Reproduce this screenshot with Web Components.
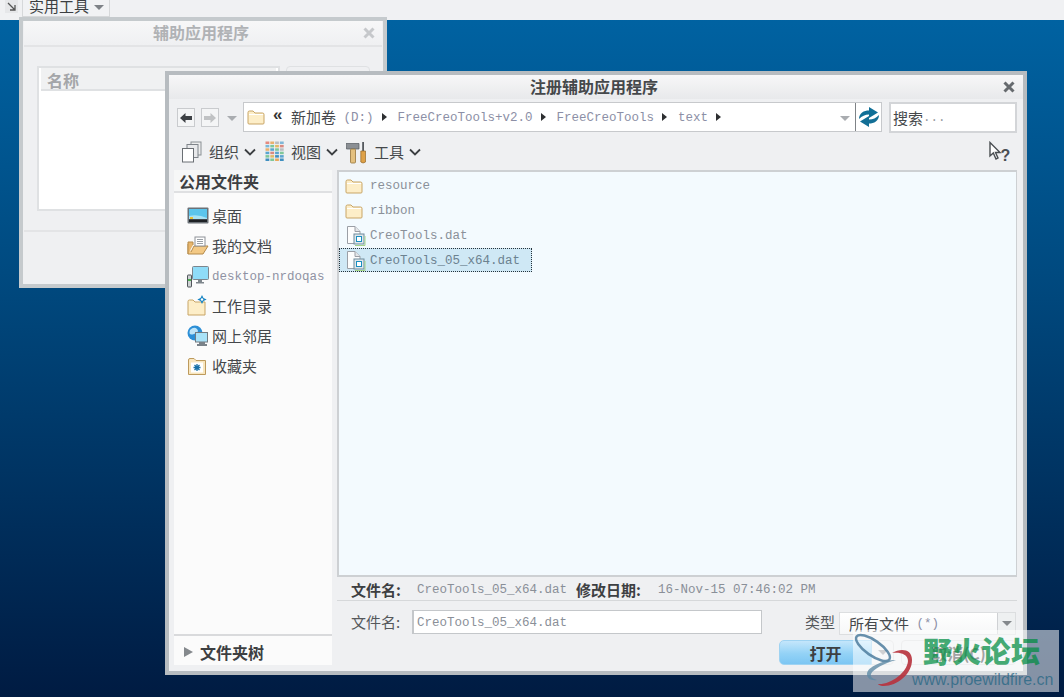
<!DOCTYPE html>
<html lang="zh"><head><meta charset="utf-8"><style>
html,body{margin:0;padding:0;height:100%}
body{width:1064px;height:697px;overflow:hidden;font-family:"Noto Sans CJK SC","Noto Sans",sans-serif}
</style></head><body>
<cad-desktop>
  <cad-ribbon slot="top">实用工具</cad-ribbon>
  <back-dialog></back-dialog>
  <file-dialog></file-dialog>
  <forum-mark></forum-mark>
</cad-desktop>
<script>
const CJK='"Noto Sans CJK SC","Noto Sans",sans-serif', MONO='"Liberation Mono",monospace';
const VIEWC=[['#e58a7e','#e9b06c','#b9bcc0','#7fb7d8'],['#7ab8d8','#7fc79a','#e3b866','#d98a80'],['#e9b06c','#5aa5d0','#7fc79a','#b9bcc0'],['#5aa5d0','#d98a80','#5aa5d0','#7fc79a'],['#7fc79a','#e3b866','#3f8fc0','#5aa5d0'],['#3f8fc0','#7fc79a','#e9a95c','#3f8fc0']];
const ICON={
 folder:`<svg width="18" height="16" viewBox="0 0 18 16"><path d="M1 3.500Q1 2 2.500 2H6L8 4H15.500Q17 4 17 5.500V14Q17 15 16 15H2Q1 15 1 14Z" fill="#fdeec8" stroke="#c8a566"/><path d="M2 5.500H16" stroke="#fff"/></svg>`,
 file:`<svg width="22" height="22" viewBox="0 0 22 22"><path d="M2.500 1.500H10L15 6.500V18.500H2.500Z" fill="#fdfdfd" stroke="#9b9fa6"/><path d="M10 1.500V6.500H15" fill="#e4e6e9" stroke="#9b9fa6"/><rect x="9" y="9" width="10" height="10" fill="#dfe7ec" stroke="#6f8b9c"/><rect x="11.500" y="11.500" width="5" height="5" fill="#fff" stroke="#1a8fc0"/><path d="M10 20.500H20V11" fill="none" stroke="#a5d58a"/></svg>`,
 desk:`<svg width="22" height="18" viewBox="0 0 22 18"><rect x=".5" y=".5" width="21" height="16" rx="1" fill="#6b7177"/><rect x="2" y="2" width="18" height="10" fill="#5cc5ec"/><path d="M2 9Q11 7 20 11V12H2Z" fill="#a9e3f5"/><rect x="2" y="12.500" width="18" height="2.500" fill="#1d2125"/><rect x="3" y="10" width="3" height="2" fill="#e7c13c"/></svg>`,
 docs:`<svg width="22" height="20" viewBox="0 0 22 20"><path d="M1 8V18H16L21 10H7L4 16" fill="#f3c985" stroke="#b48a4a"/><path d="M1 18V6H6V9" fill="#e8b66d" stroke="#b48a4a"/><rect x="8" y="1" width="10" height="9" fill="#fff" stroke="#8d9197"/><path d="M10 3.500H16M10 5.500H16M10 7.500H16" stroke="#9aa0a6"/></svg>`,
 pc:`<svg width="22" height="22" viewBox="0 0 22 22"><rect x="5.500" y=".5" width="16" height="13" rx="1" fill="#8fdcf8" stroke="#7d858c"/><path d="M11 14V16H9V17.500H17V16H15V14" fill="#7e868c"/><rect x=".5" y="9" width="4" height="12" rx=".5" fill="#cfd2d4" stroke="#50565b"/><rect x="1" y="13" width="3" height="2" fill="#4caf50"/></svg>`,
 work:`<svg width="21" height="22" viewBox="0 0 21 22"><path d="M1 6.500Q1 5 2.500 5H6L8 7H18V20H1Z" fill="#fdeec8" stroke="#c8a566"/><path d="M15 0L16.500 3L19.700 4.500L16.500 6L15 9L13.500 6L10.300 4.500L13.500 3Z" fill="#1b86c4"/><circle cx="15" cy="4.500" r="1.200" fill="#fff"/></svg>`,
 net:`<svg width="22" height="22" viewBox="0 0 22 22"><circle cx="8" cy="8" r="7.500" fill="#2d8fd6"/><path d="M3 5Q7 1 10 4T7 9T3 5ZM9 11Q13 9 14 12L10 15Z" fill="#bde4f8"/><rect x="8.500" y="7.500" width="12" height="9.500" fill="#a9e2f8" stroke="#737b82"/><path d="M12 18H18M10 20H20" stroke="#7a8289" stroke-width="2"/></svg>`,
 fav:`<svg width="20" height="20" viewBox="0 0 20 20"><path d="M1.500 4Q1.500 2.500 3 2.500H7L9 4.500H18.500V18.500H1.500Z" fill="#f8e6bf" stroke="#bd9a5c"/><rect x="4" y="6.500" width="12" height="10" fill="#fff"/><path d="M10 8V15M6.500 11.500H13.500M7.500 9L12.500 14M12.500 9L7.500 14" stroke="#1770a8" stroke-width="1.300"/></svg>`,
 org:`<svg width="22" height="22" viewBox="0 0 22 22"><rect x="10" y="1" width="10" height="13" fill="#eceded" stroke="#8a8f94"/><rect x="6" y="3.500" width="11" height="13" fill="#e8e9eb" stroke="#7f848a"/><rect x="1.500" y="7.500" width="11" height="13.500" fill="#fff" stroke="#6a6f74"/></svg>`,
 view:`<svg width="20" height="21" viewBox="0 0 20 21">${VIEWC.map((row,r)=>row.map((c,i)=>`<rect x="${.5+i*4.8}" y="${.5+r*3.4}" width="3.800" height="2.500" fill="${c}"/>`).join('')).join('')}</svg>`,
 tools:`<svg width="22" height="24" viewBox="0 0 22 24"><path d="M0 3.500H13V9H0.500Q-.5 6 0 3.500Z" fill="#8b8f94" stroke="#55595e" stroke-width=".7"/><rect x="4.500" y="9" width="5" height="14" rx="1" fill="#e4c07f" stroke="#96743a" stroke-width=".8"/><rect x="16.200" y="2" width="1.800" height="9" fill="#55595e"/><path d="M14.800 11H19.500V22Q17 24 14.800 22Z" fill="#dfa148" stroke="#93692a" stroke-width=".7"/></svg>`,
 back:`<svg width="14" height="12" viewBox="0 0 14 12"><path d="M6.500 1L1 6L6.500 11V8H13V4H6.500Z" fill="#3d4145"/></svg>`,
 sync:`<svg width="22" height="20" viewBox="0 0 22 20"><path d="M1 12C1 6 6 3.500 11 3.500V0L20 5.500L11 11V7.500C7 7.500 4 9 1 12Z" fill="#0f6f97"/><path d="M21 8C21 14 16 16.500 11 16.500V20L2 14.500L11 9V12.500C15 12.500 18 11 21 8Z" fill="#136f96"/></svg>`,
 tip:`<svg width="24" height="22" viewBox="0 0 24 22"><path d="M2 1.500V15L5.300 12L8 18L10 17L7.500 11.500H12Z" fill="#fff" stroke="#4a4e52" stroke-width="1.400"/><text x="12.500" y="20" font-family="Liberation Sans" font-weight="700" font-size="16" fill="#4a4e52">?</text></svg>`
};
function define(name,css,html){
  customElements.define(name,class extends HTMLElement{
    constructor(){super();const r=this.attachShadow({mode:'open'});
      const t=document.createElement('template');
      t.innerHTML=`<style>${css}</style>${typeof html==='function'?html(this):html}`;
      r.appendChild(t.content.cloneNode(true));}
  });
}
define('cad-desktop',`:host{display:block;position:relative;width:1064px;height:697px;overflow:hidden;
  background:linear-gradient(#0064a4 0,#004a80 39%,#001b42 100%)}
  .top{height:20px;background:#f0f1f3}`,`<div class="top"><slot name="top"></slot></div><slot></slot>`);
define('cad-ribbon',`:host{display:flex;height:20px;align-items:stretch;font:15px/16px ${CJK};color:#3d3f42}
  .cor{width:13px;height:13px;margin:0 4px 0 5px;background:#e6e7e9;display:flex;align-items:center;justify-content:center}
  .tab{width:88px;box-sizing:border-box;margin-top:-4px;height:21px;border:1px solid #d6d8da;border-top:0;display:flex;align-items:center;gap:5px;padding-left:6px;background:#f1f2f4}
  i{border:5px solid transparent;border-top:5px solid #7e8287;border-bottom:0;margin-top:2px}`,
  `<div class="cor"><svg width="10" height="10" viewBox="0 0 10 10"><path d="M1 1L8 8M8 3V8H3" stroke="#555" stroke-width="1.300" fill="none"/></svg></div><div class="tab"><slot></slot><i></i></div>`);
define('win-close',`:host{display:block;width:12px;height:12px} svg{display:block}`,`<svg width="12" height="12" viewBox="0 0 12 12"><path d="M1.500 1.500L10.500 10.500M10.500 1.500L1.500 10.500" stroke="var(--x,#5f6468)" stroke-width="3"/></svg>`);
define('back-dialog',`:host{position:absolute;left:19px;top:17px;width:368px;height:271px;box-sizing:border-box;border:4px solid #c5cacd;background:#eff0f2;display:flex;flex-direction:column;--x:#c6c8cb}
  .t{height:26px;box-sizing:border-box;flex:none;border-bottom:2px solid #e3e4e6;margin:0 1px;padding:0 4px 2px 0;background:linear-gradient(#f7f7f8,#eff0f2);display:flex;align-items:center;justify-content:center;position:relative;font:700 16px/20px ${CJK};color:#b0b2b5}
  win-close{position:absolute;right:7px;top:6px}
  .body{flex:1;display:flex;gap:6px;padding:19px 13px 0 14px}
  .list{width:244px;height:145px;box-sizing:border-box;border:2px solid #dfe1e3;background:#fff}
  .h{height:23px;margin:0 2px;background:#f0f1f2;border-bottom:2px solid #dfe1e3;box-sizing:border-box;font:700 16px/25px ${CJK};color:#a4a6a9;padding-left:6px;overflow:hidden}
  .btn{width:83px;height:24px;border:1px solid #dfe1e3;border-radius:4px}
  .foot{flex:none;height:52px;border-top:2px solid #e3e4e6;margin:0 1px}`,
  `<div class="t">辅助应用程序<win-close></win-close></div><div class="body"><div class="list"><div class="h">名称</div></div><div class="btn"></div></div><div class="foot"></div>`);
define('nav-item',`:host{display:flex;height:30px;box-sizing:border-box;align-items:center;font:15px/20px ${CJK};color:#45484b;padding-left:13px}
  .i{width:25px;display:flex;align-items:center;flex:none}
  :host([mono]){font:12.5px/20px ${MONO};color:#8f92a3;padding-top:2px}`,
  h=>`<div class="i">${ICON[h.getAttribute('icon')]}</div><slot></slot>`);
define('file-row',`:host{display:flex;width:193px;height:24px;margin:0 0 1px 0;box-sizing:border-box;align-items:center;padding:2px 0 0 6px;font:12.5px/16px ${MONO};color:#8a9099}
  .i{width:25px;height:22px;display:flex;align-items:center;flex:none}
  :host([sel]){background:#cfe8f5;outline:1px dotted #26323a;outline-offset:-1px;color:#6c8290}`,
  h=>`<div class="i">${ICON[h.getAttribute('icon')]}</div><slot></slot>`);
define('address-bar',`:host{display:flex;height:31px;align-items:center;font:15px/20px ${CJK};color:#45484b}
  .nav{width:18px;height:19px;box-sizing:border-box;border:1px solid #c9cbce;background:#f4f5f6;display:flex;align-items:center;justify-content:center;margin-right:6px}
  .nav.off svg{opacity:.28;transform:scaleX(-1)}
  .drop{border:5px solid transparent;border-top:5px solid #a9acb0;border-bottom:0;margin:1px 6px 0 2px}
  .box{width:639px;height:30px;margin-bottom:1px;box-sizing:border-box;border:1px solid #c7c9cc;background:#fff;display:flex;align-items:center;padding-left:3px}
  .pre{width:23px;display:flex}
  .crumbs{flex:1;display:flex;align-items:center;white-space:nowrap;margin-left:3px}
  .m{font:12.5px/16px ${MONO};color:#8c8fa6;margin-top:2px}
  b{width:18px;flex:none;font:700 17px/16px "Liberation Sans",sans-serif;color:#333;margin:-4px 0 0 0}
  u{display:block;border:4px solid transparent;border-left:5px solid #2d2f31;border-right:0;margin:0 11px 0 8px}
  .cd{border:5px solid transparent;border-top:5px solid #a9acb0;border-bottom:0;margin:2px 5px 0 0}
  .r{width:26px;height:28px;box-sizing:border-box;border-left:1px solid #7f8387;display:flex;align-items:center;justify-content:center}
  .s{width:128px;height:31px;box-sizing:border-box;margin-left:7px;border:2px solid #d3d5d8;background:#fff;display:flex;align-items:center;padding-left:2px}
  .s span{font-family:${MONO};font-size:12.5px;color:#9a9da2}`,
  `<div class="nav">${ICON.back}</div><div class="nav off">${ICON.back}</div><i class="drop"></i>
   <div class="box"><div class="pre">${ICON.folder}</div><div class="crumbs"><b>«</b>新加卷<span class="m">&nbsp;(D:)</span><u></u><span class="m">FreeCreoTools+v2.0</span><u></u><span class="m">FreeCreoTools</span><u></u><span class="m">text</span><u></u></div><i class="cd"></i><div class="r">${ICON.sync}</div></div>
   <div class="s">搜索<span>...</span></div>`);
define('tool-strip',`:host{display:flex;height:37px;align-items:center;font:15px/20px ${CJK};color:#45484b;padding-left:4px}
  .g{display:flex;align-items:center}
  .ch{width:12px;height:8px;margin:0 0 0 5px;display:block}
  .tip{margin-left:auto;margin-right:5px;display:flex}`,
  ()=>{const ch=`<svg class="ch" viewBox="0 0 12 8"><path d="M1 1.500L6 6.500L11 1.500" fill="none" stroke="#3c3f42" stroke-width="1.800"/></svg>`;
   return `<div class="g" style="width:84px"><span style="width:28px;display:flex">${ICON.org}</span>组织${ch}</div><div class="g" style="width:81px"><span style="width:26px;display:flex">${ICON.view}</span>视图${ch}</div><div class="g"><span style="width:28px;display:flex">${ICON.tools}</span>工具${ch}</div><div class="tip">${ICON.tip}</div>`});
define('drop-field',`:host{display:flex;box-sizing:border-box;width:177px;height:23px;margin-top:2px;border:1px solid #dcdee0;background:linear-gradient(#fff,#f6f7f8);align-items:center;font:15px/20px ${CJK};color:#45484b;padding-left:9px}
  .a{margin-left:auto;width:17px;height:21px;border-left:1px solid #cfd1d4;background:#eef0f1;display:flex;align-items:center;justify-content:center}
  i{border:5px solid transparent;border-top:5px solid #84888c;border-bottom:0}
  span{font:12.5px/16px ${MONO};color:#8c8fa6}`,
  `<slot></slot><span>&nbsp;(*)</span><div class="a"><i></i></div>`);
define('file-dialog',`:host{position:absolute;left:165px;top:71px;width:862px;height:604px;box-sizing:border-box;border:4px solid #b7bcc0;background:#eff0f2;display:flex;flex-direction:column;--x:#666a6e}
  .t{height:24px;box-sizing:border-box;padding:0 4px 2px 0;flex:none;background:linear-gradient(#f7f7f8,#e8e9eb);display:flex;align-items:center;justify-content:center;position:relative;font:700 16px/20px ${CJK};color:#45484b}
  win-close{position:absolute;right:8px;top:6px}
  .in{flex:1;display:flex;flex-direction:column;padding:3px 6px 6px 8px;min-height:0}
  .main{flex:1;display:flex;gap:5px;min-height:0;margin-left:-3px}
  .side{width:158px;flex:none;background:#fbfbfb;display:flex;flex-direction:column}
  .sh{height:23px;flex:none;box-sizing:border-box;border-bottom:2px solid #dfe0e2;font:700 16px/23px ${CJK};color:#3d3f42;padding-left:5px;margin-bottom:8px;background:#f6f7f7}
  .tree{margin-top:auto;height:31px;flex:none;box-sizing:border-box;padding-top:3px;border-top:2px solid #d9dadc;display:flex;align-items:center;font:700 16px/20px ${CJK};color:#3d3f42;padding-left:10px;gap:7px}
  .tree i{border:5px solid transparent;border-left:9px solid #85898d;border-right:0}
  .right{flex:1;display:flex;flex-direction:column;min-width:0}
  .list{height:407px;flex:none;box-sizing:border-box;border:2px solid #cdd0d3;border-right-width:1px;background:#f3fafe;padding:1px 0 0 0}
  .info{height:24px;flex:none;box-sizing:border-box;padding-top:2px;border-bottom:1px solid #d6d8da;display:flex;align-items:center;padding-left:14px;font:700 15px/20px ${CJK};color:#3d3f42;white-space:nowrap}
  .info em{font-style:normal;flex:none}
  .info span{font:12.5px/16px ${MONO};color:#8a8f98}
  .form{display:flex;align-items:flex-start;margin-top:9px;height:24px;padding-left:14px;font:15px/24px ${CJK};color:#55585b}
  .inp{width:350px;height:24px;flex:none;box-sizing:border-box;border:1px solid #c4c7ca;border-left-width:2px;background:#fff;font:12.5px/24px ${MONO};color:#8a8f98;padding-left:3px;margin-right:43px}
  .lab{width:34px;flex:none}
  .btns{display:flex;margin-top:6px;height:25px;padding-left:442px;font:700 16px/25px ${CJK};color:#3d3f42}
  .ok{width:93px;text-align:center;background:linear-gradient(#c4e6fb,#93d2f6 55%,#7cc6f3);border-radius:5px 0 0 5px;border:1px solid #9fd3f2;box-sizing:border-box}
  .okd{width:22px;box-sizing:border-box;border:1px solid #dcdee0;border-left:0;border-radius:0 5px 5px 0;display:flex;align-items:center;justify-content:center}
  .okd i{border:5px solid transparent;border-top:5px solid #9b9ea2;border-bottom:0}
  .no{width:115px;margin-left:7px;box-sizing:border-box;border:1px solid #dcdee0;border-radius:4px;text-align:center}`,
  `<div class="t">注册辅助应用程序<win-close></win-close></div>
   <div class="in">
    <address-bar></address-bar>
    <tool-strip></tool-strip>
    <div class="main">
     <div class="side">
      <div class="sh">公用文件夹</div>
      <nav-item icon="desk">桌面</nav-item>
      <nav-item icon="docs">我的文档</nav-item>
      <nav-item icon="pc" mono>desktop-nrdoqas</nav-item>
      <nav-item icon="work">工作目录</nav-item>
      <nav-item icon="net">网上邻居</nav-item>
      <nav-item icon="fav">收藏夹</nav-item>
      <div class="tree"><i></i>文件夹树</div>
     </div>
     <div class="right">
      <div class="list">
       <file-row icon="folder">resource</file-row>
       <file-row icon="folder">ribbon</file-row>
       <file-row icon="file">CreoTools.dat</file-row>
       <file-row icon="file" sel>CreoTools_05_x64.dat</file-row>
      </div>
      <div class="info"><em style="width:66px">文件名:</em><span style="width:159px">CreoTools_05_x64.dat</span><em style="width:82px">修改日期:</em><span>16-Nov-15 07:46:02 PM</span></div>
      <div class="form"><span style="width:61px;flex:none">文件名:</span><div class="inp">CreoTools_05_x64.dat</div><span class="lab">类型</span><drop-field>所有文件</drop-field></div>
      <div class="btns"><div class="ok">打开</div><div class="okd"><i></i></div><div class="no">取消(C)</div></div>
     </div>
    </div>
   </div>`);
define('forum-mark',`:host{position:absolute;left:853px;top:630px;width:206px;height:62px;background:rgba(255,255,255,.52);overflow:hidden}
  svg{position:absolute;left:0;top:0}
  .a{position:absolute;left:70px;top:-1px;font:900 29px/42px ${CJK};color:rgba(0,140,65,.72);letter-spacing:.3px;white-space:nowrap}
  .b{position:absolute;left:59px;top:39px;font:16px/22px "Liberation Sans",sans-serif;color:rgba(30,100,130,.72);white-space:nowrap}`,
  `<svg width="70" height="62" viewBox="0 0 70 62"><ellipse cx="20" cy="18" rx="20" ry="7.500" transform="rotate(35 20 18)" fill="none" stroke="#4d7d9e" stroke-width="2.500" opacity=".85"/><path d="M39 23C48 18 59 19 59 30C59 44 44 56 31 56C26 56 25 54 25 54C37 55 54 43 55 31C55 24 47 22 39 23Z" fill="#b7343f" opacity=".92"/><path d="M43 30C30 30 14 37 14 44C14 48 18 51 24 50C20 49 17 47 18 44C20 39 32 33 43 30Z" fill="#5e8aa5" opacity=".8"/></svg>
   <div class="a">野火论坛</div><div class="b">www.proewildfire.cn</div>`);
</script>
</body></html>
